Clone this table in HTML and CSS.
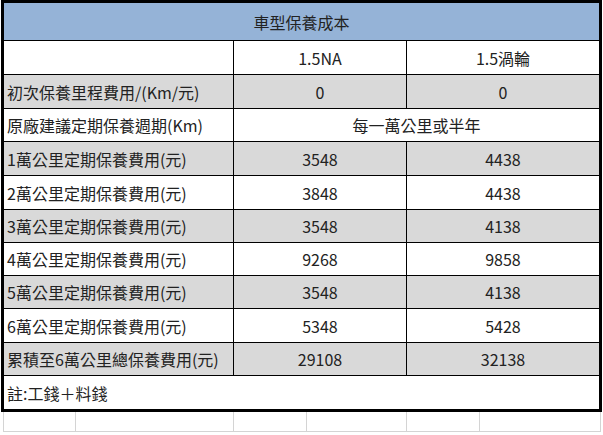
FILE: index.html
```html
<!DOCTYPE html>
<html lang="zh-Hant">
<head>
<meta charset="utf-8">
<title>車型保養成本</title>
<link rel="stylesheet" href="styles.css">
</head>
<body>
<div class="sheet">
  <div class="table">
    <div class="title">車型保養成本</div>
    <div class="row h34">
      <div class="cell label"></div>
      <div class="cell num">1.5NA</div>
      <div class="cell num">1.5渦輪</div>
    </div>
    <div class="row h34 gray">
      <div class="cell label">初次保養里程費用/(Km/元)</div>
      <div class="cell num">0</div>
      <div class="cell num">0</div>
    </div>
    <div class="row h33">
      <div class="cell label">原廠建議定期保養週期(Km)</div>
      <div class="cell num span2">每一萬公里或半年</div>
    </div>
    <div class="row h34 gray">
      <div class="cell label">1萬公里定期保養費用(元)</div>
      <div class="cell num">3548</div>
      <div class="cell num">4438</div>
    </div>
    <div class="row h34">
      <div class="cell label">2萬公里定期保養費用(元)</div>
      <div class="cell num">3848</div>
      <div class="cell num">4438</div>
    </div>
    <div class="row h33 gray">
      <div class="cell label">3萬公里定期保養費用(元)</div>
      <div class="cell num">3548</div>
      <div class="cell num">4138</div>
    </div>
    <div class="row h33">
      <div class="cell label">4萬公里定期保養費用(元)</div>
      <div class="cell num">9268</div>
      <div class="cell num">9858</div>
    </div>
    <div class="row h33 gray">
      <div class="cell label">5萬公里定期保養費用(元)</div>
      <div class="cell num">3548</div>
      <div class="cell num">4138</div>
    </div>
    <div class="row h34">
      <div class="cell label">6萬公里定期保養費用(元)</div>
      <div class="cell num">5348</div>
      <div class="cell num">5428</div>
    </div>
    <div class="row h33 gray">
      <div class="cell label">累積至6萬公里總保養費用(元)</div>
      <div class="cell num">29108</div>
      <div class="cell num">32138</div>
    </div>
    <div class="row h34 note">
      <div class="cell label">註:工錢＋料錢</div>
    </div>
  </div>
  <div class="gridlines">
    <div class="gl w72"></div>
    <div class="gl w158"></div>
    <div class="gl w73"></div>
    <div class="gl w100"></div>
    <div class="gl w73"></div>
    <div class="gl w120 last"></div>
  </div>
</div>
</body>
</html>
```
FILE: styles.css
```css
* { box-sizing: border-box; }
html, body { margin: 0; padding: 0; background: #fff; }
body {
  font-family: "Noto Sans CJK TC", "Noto Sans", sans-serif;
  font-size: 16px;
  color: #222;
}
.sheet { width: 603px; height: 435px; overflow: hidden; }
.table {
  margin-left: 1px;
  width: 601px;
  border: 3px solid #000;
  background: #fff;
  position: relative;
  z-index: 1;
}
.title {
  height: 37px;
  background: #95b3d7;
  display: flex;
  align-items: center;
  justify-content: center;
  line-height: 1;
}
.row {
  display: grid;
  grid-template-columns: 229px 173px 193px;
  border-top: 1px solid #000;
}
.h34 { height: 34px; }
.h33 { height: 33px; }
.gray { background: #d9d9d9; }
.cell {
  display: flex;
  align-items: center;
  line-height: 1;
  white-space: nowrap;
}
.label { padding-left: 3px; }
.num { justify-content: center; border-left: 1px solid #000; }
.span2 { grid-column: 2 / 4; }
.note .label { grid-column: 1 / 4; }
.gridlines {
  display: flex;
  margin-left: 3px;
  margin-top: 0;
}
.gl {
  height: 20px;
  border-left: 1px solid #d4d4d4;
  border-bottom: 1px solid #d4d4d4;
}
.gl.last { border-right: 1px solid #d4d4d4; }
.w72 { width: 72px; }
.w158 { width: 158px; }
.w73 { width: 73px; }
.w100 { width: 100px; }
.w120 { width: 122px; }
```
